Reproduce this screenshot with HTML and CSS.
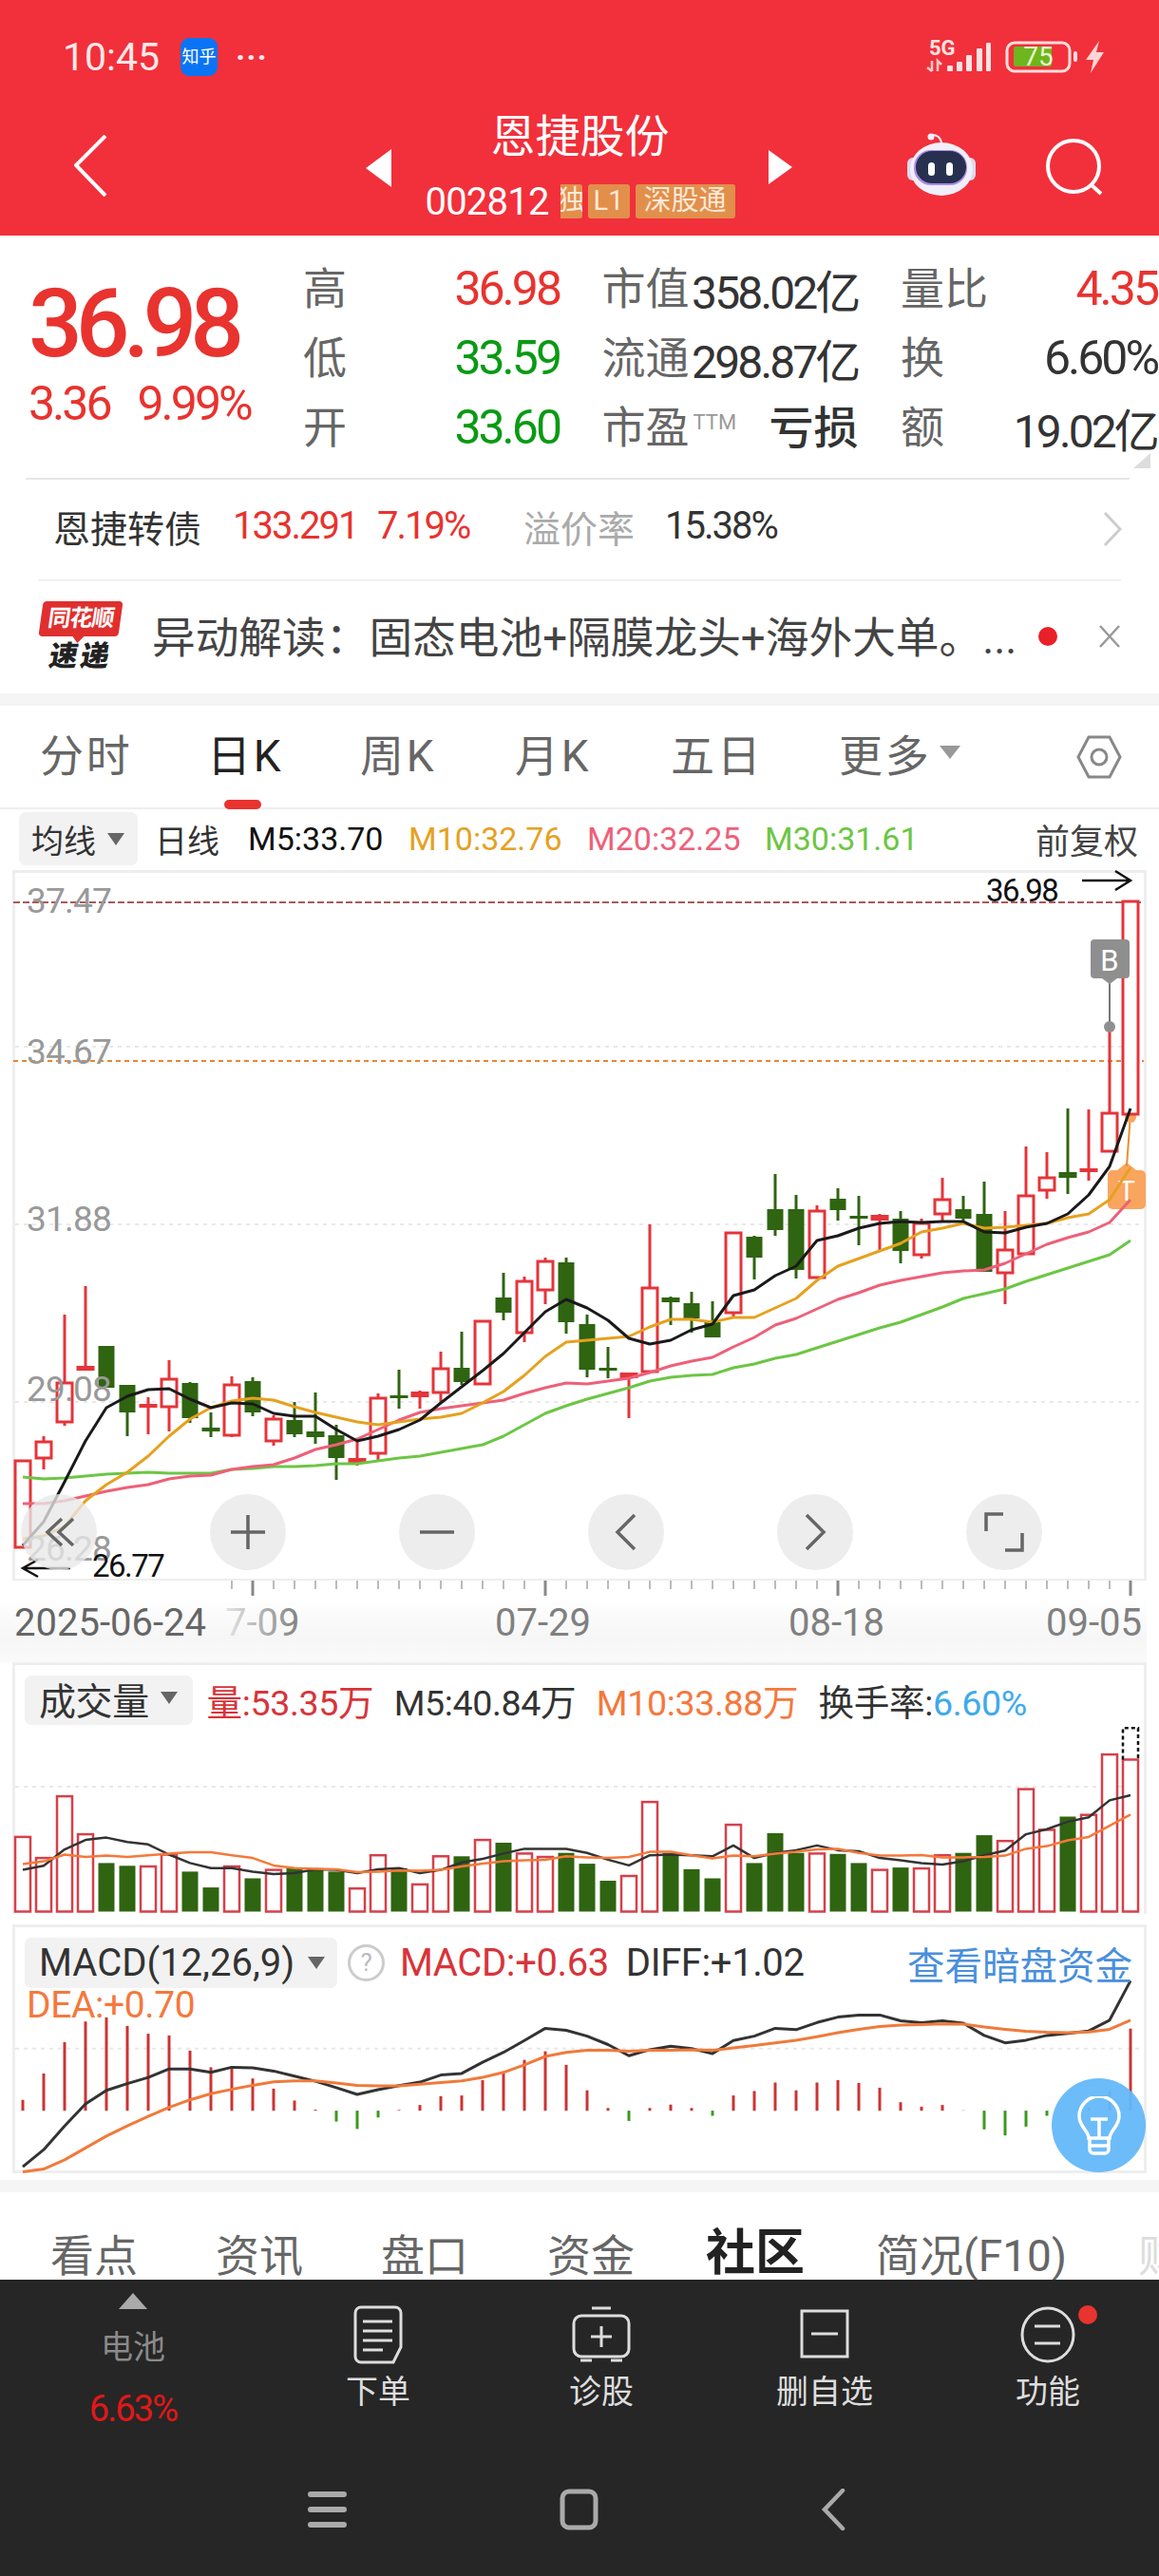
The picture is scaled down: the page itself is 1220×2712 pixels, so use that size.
FILE: index.html
```html
<!DOCTYPE html>
<html lang="zh-CN">

<head>
    <meta charset="UTF-8">
    <meta name="viewport" content="width=device-width, initial-scale=1.0">
    <title>恩捷股份</title>
    <link rel="stylesheet" href="styles.css">
</head>

<body>
    <div class="phone">
        <header class="top">
            <div class="status">
                <div class="status-left">
                    <span class="clock">10:45</span>
                    <span class="zhihu">知乎</span>
                    <span class="dots">···</span>
                </div>
                <svg class="status-right" width="188" height="36" viewBox="975 42 188 36">
                    <text x="978" y="58" class="net">5G</text>
                    <path d="M981 64v11M976 71l5 4M987 75V64l4 4" fill="none" stroke="#ffc9c9" stroke-width="2.500" />
                    <g fill="#fde3e3">
                        <rect x="997" y="69" width="6" height="6" rx="1" />
                        <rect x="1007" y="65" width="6" height="10" rx="1" />
                        <rect x="1017" y="58" width="6" height="17" rx="1" />
                        <rect x="1028" y="51" width="6" height="24" rx="1" />
                        <rect x="1038" y="45" width="5" height="30" rx="1" />
                    </g>
                    <rect x="1060" y="45" width="66" height="30" rx="8" fill="none" stroke="#fdd" stroke-width="3" />
                    <rect x="1067" y="49" width="40" height="21" rx="2" fill="#6fb51c" />
                    <text x="1093" y="69" class="batt">75</text>
                    <rect x="1130" y="54" width="4" height="11" rx="2" fill="#fdd" />
                    <path d="M1157 43l-14 20h8l-3 14 14-22h-8z" fill="#ffd5d5" />
                </svg>
            </div>
            <div class="nav">
                <svg class="back" width="35" height="65" viewBox="0 0 35 65">
                    <path d="M33 1L2 32l31 32" fill="none" stroke="#fff" stroke-width="4" />
                </svg>
                <svg class="tri-left" width="27" height="40" viewBox="0 0 27 40">
                    <path d="M27 0v40L0 20z" fill="#fff" />
                </svg>
                <div class="nav-center">
                    <div class="nav-title">恩捷股份</div>
                    <div class="nav-code">
                        <span class="code">002812</span>
                        <span class="tag tag-cut"><span>独</span></span>
                        <span class="tag tag-l1">L1</span>
                        <span class="tag tag-sz">深股通</span>
                    </div>
                </div>
                <svg class="tri-right" width="25" height="36" viewBox="0 0 25 36">
                    <path d="M0 0v36l25-18z" fill="#fff" />
                </svg>
                <svg class="robot" width="72" height="66" viewBox="0 0 72 66">
                    <circle cx="25" cy="4" r="3.500" fill="#eef" />
                    <path d="M26 2c6 0 9 3 10 8" fill="none" stroke="#eef" stroke-width="2" />
                    <rect x="0" y="26" width="72" height="24" rx="6" fill="#dcd9ee" />
                    <ellipse cx="36" cy="38" rx="33" ry="28" fill="#f1eff9" />
                    <rect x="7" y="18" width="56" height="37" rx="18" fill="#a98be8" />
                    <rect x="9" y="19" width="53" height="34" rx="17" fill="#27304f" />
                    <rect x="22" y="31" width="7" height="14" rx="3.500" fill="#fff" />
                    <rect x="41" y="31" width="7" height="14" rx="3.500" fill="#fff" />
                </svg>
                <svg class="search" width="62" height="60" viewBox="0 0 62 60">
                    <ellipse cx="30" cy="29" rx="27" ry="27" fill="none" stroke="#fff" stroke-width="4" />
                    <path d="M48 48l11 10" stroke="#fff" stroke-width="4" />
                </svg>
            </div>
        </header>

        <section class="quote">
            <div class="price-box">
                <div class="price">36.98</div>
                <div class="change"><span>3.36</span><span>9.99%</span></div>
            </div>
            <div class="stats">
                <div class="stat"><span class="lab">高</span><span class="val up">36.98</span></div>
                <div class="stat"><span class="lab">市值</span><span class="val val-sm">358.02亿</span></div>
                <div class="stat"><span class="lab">量比</span><span class="val up">4.35</span></div>
                <div class="stat"><span class="lab">低</span><span class="val down">33.59</span></div>
                <div class="stat"><span class="lab">流通</span><span class="val val-sm">298.87亿</span></div>
                <div class="stat"><span class="lab">换</span><span class="val">6.60%</span></div>
                <div class="stat"><span class="lab">开</span><span class="val down">33.60</span></div>
                <div class="stat"><span class="lab">市盈<sup class="ttm">TTM</sup></span><span class="val-cn">亏损</span></div>
                <div class="stat"><span class="lab">额</span><span class="val val-sm">19.02亿</span></div>
            </div>
            <i class="corner"></i>
        </section>
        <div class="divider"></div>

        <section class="bond">
            <span class="bond-name">恩捷转债</span>
            <span class="bond-price">133.291</span>
            <span class="bond-pct">7.19%</span>
            <span class="bond-lab">溢价率</span>
            <span class="bond-val">15.38%</span>
            <svg class="bond-more" width="20" height="36" viewBox="0 0 20 36">
                <path d="M2 1l16 17L2 35" fill="none" stroke="#ccc" stroke-width="3" />
            </svg>
        </section>
        <div class="divider divider-news"></div>

        <section class="news">
            <div class="news-logo">
                <span class="logo-top">同花顺</span>
                <span class="logo-bottom">速递</span>
            </div>
            <div class="news-text">异动解读：固态电池+隔膜龙头+海外大单。...</div>
            <i class="news-dot"></i>
            <svg class="news-close" width="24" height="24" viewBox="0 0 24 24">
                <path d="M2 1l20 22M22 1L2 23" stroke="#999" stroke-width="2.500" />
            </svg>
        </section>
        <div class="band"></div>

        <nav class="tabs">
            <span>分时</span>
            <span class="tab-on">日K</span>
            <span>周K</span>
            <span>月K</span>
            <span>五日</span>
            <span class="tab-more">更多<i class="caret caret-more"></i></span>
            <svg class="hex" width="48" height="48" viewBox="0 0 48 48">
                <path d="M13 3h22l11 21-11 21H13L2 24z" fill="none" stroke="#888" stroke-width="3" />
                <circle cx="24" cy="24" r="8" fill="none" stroke="#888" stroke-width="3" />
            </svg>
        </nav>

        <div class="ma-row">
            <span class="chip chip-ma">均线<i class="caret"></i></span>
            <span class="ma-day">日线</span>
            <span class="m5">M5:33.70</span>
            <span class="m10">M10:32.76</span>
            <span class="m20">M20:32.25</span>
            <span class="m30">M30:31.61</span>
            <span class="fq">前复权</span>
        </div>

        <div class="kline">
            <svg id="chartK" class="plot" width="1188" height="743" viewBox="16 919 1188 743"></svg>
            <div class="tools">
                <span class="tool"><svg width="44" height="44" viewBox="0 0 44 44"><path d="M25 8L10 22l15 14M37 8L22 22l15 14" fill="none" stroke="#666" stroke-width="3.500" /></svg></span>
                <span class="tool"><svg width="40" height="40" viewBox="0 0 40 40"><path d="M20 2v36M2 20h36" stroke="#666" stroke-width="3.500" /></svg></span>
                <span class="tool"><svg width="40" height="40" viewBox="0 0 40 40"><path d="M2 20h36" stroke="#666" stroke-width="3.500" /></svg></span>
                <span class="tool"><svg width="24" height="40" viewBox="0 0 24 40"><path d="M21 2L3 20l18 18" fill="none" stroke="#666" stroke-width="3.500" /></svg></span>
                <span class="tool"><svg width="24" height="40" viewBox="0 0 24 40"><path d="M3 2l18 18L3 38" fill="none" stroke="#666" stroke-width="3.500" /></svg></span>
                <span class="tool"><svg width="42" height="42" viewBox="0 0 42 42"><path d="M2 20V2h18M40 22v18H22" fill="none" stroke="#666" stroke-width="3.500" /></svg></span>
            </div>
        </div>

        <div class="time-axis">
            <svg id="chartAxis" width="1220" height="86" viewBox="0 1664 1220 86"></svg>
        </div>

        <div class="panel panel-vol">
            <svg id="chartVol" class="plot" width="1188" height="262" viewBox="16 1753 1188 262"></svg>
            <div class="panel-head">
                <span class="chip chip-vol">成交量<i class="caret"></i></span>
                <span class="t-red">量:53.35万</span>
                <span class="t-dark">M5:40.84万</span>
                <span class="t-orange">M10:33.88万</span>
                <span class="t-dark">换手率:<span class="t-blue">6.60%</span></span>
            </div>
        </div>

        <div class="panel panel-macd">
            <svg id="chartMacd" class="plot" width="1188" height="256" viewBox="16 2029 1188 256"></svg>
            <div class="panel-head macd-head">
                <span class="chip chip-macd">MACD(12,26,9)<i class="caret"></i></span>
                <span class="help">?</span>
                <span class="t-red">MACD:+0.63</span>
                <span class="t-dark t-diff">DIFF:+1.02</span>
                <span class="t-link">查看暗盘资金</span>
            </div>
            <div class="dea">DEA:+0.70</div>
            <span class="bulb">
                <svg width="46" height="62" viewBox="0 0 46 62">
                    <path d="M12 44c0-8-10-12-10-23a21 21 0 0 1 42 0c0 11-10 15-10 23z" fill="none" stroke="#fff" stroke-width="3.500" />
                    <path d="M14 24h18M23 24v20M13 44v12a4 4 0 0 0 4 4h12a4 4 0 0 0 4-4V44M14 52h18" fill="none" stroke="#fff" stroke-width="3.500" />
                </svg>
            </span>
        </div>

        <div class="band band-low"></div>

        <nav class="subtabs">
            <span>看点</span>
            <span>资讯</span>
            <span>盘口</span>
            <span>资金</span>
            <span class="subtab-on">社区</span>
            <span>简况(F10)</span>
            <span class="subtab-fade">财</span>
        </nav>

        <footer class="dock">
            <div class="dock-items">
                <div class="dock-item dock-sector">
                    <i class="sector-up"></i>
                    <span class="sector-name">电池</span>
                    <span class="sector-pct">6.63%</span>
                </div>
                <div class="dock-item">
                    <span class="dock-icon">
                        <svg width="54" height="62" viewBox="0 0 54 62">
                            <path d="M9 2h36a6 6 0 0 1 6 6v36l-8 16H9a6 6 0 0 1-6-6V8a6 6 0 0 1 6-6z" fill="none" stroke="#ddd" stroke-width="3" />
                            <path d="M11 17h31M11 27h31M11 37h31M11 47h21" stroke="#ddd" stroke-width="3" />
                        </svg>
                    </span>
                    <span class="dock-text">下单</span>
                </div>
                <div class="dock-item">
                    <span class="dock-icon">
                        <svg width="64" height="62" viewBox="0 0 64 62">
                            <rect x="3" y="11" width="58" height="43" rx="8" fill="none" stroke="#ddd" stroke-width="3" />
                            <path d="M22 3h20M32 22v22M21 33h22M10 58h12M42 58h12" stroke="#ddd" stroke-width="3" />
                        </svg>
                    </span>
                    <span class="dock-text">诊股</span>
                </div>
                <div class="dock-item">
                    <span class="dock-icon">
                        <svg width="52" height="62" viewBox="0 0 52 62">
                            <rect x="2" y="6" width="48" height="48" fill="none" stroke="#ddd" stroke-width="3" />
                            <path d="M12 30h28" stroke="#ddd" stroke-width="3" />
                        </svg>
                    </span>
                    <span class="dock-text">删自选</span>
                </div>
                <div class="dock-item dock-func">
                    <span class="dock-icon">
                        <svg width="58" height="62" viewBox="0 0 58 62">
                            <ellipse cx="29" cy="31" rx="27" ry="28" fill="none" stroke="#ddd" stroke-width="3" />
                            <path d="M15 22h27M15 40h27" stroke="#ddd" stroke-width="3" />
                        </svg>
                    </span>
                    <span class="dock-text">功能</span>
                    <i class="func-dot"></i>
                </div>
            </div>
        </footer>

        <div class="softkeys">
            <svg class="key-menu" width="41" height="40" viewBox="0 0 41 40">
                <path d="M3 4h35M3 20h35M3 36h35" stroke="#aaa" stroke-width="6" stroke-linecap="round" />
            </svg>
            <svg class="key-home" width="41" height="44" viewBox="0 0 41 44">
                <rect x="3" y="3" width="35" height="38" rx="7" fill="none" stroke="#aaa" stroke-width="5" />
            </svg>
            <svg class="key-back" width="26" height="44" viewBox="0 0 26 44">
                <path d="M23 2L4 22l19 20" fill="none" stroke="#aaa" stroke-width="4.500" stroke-linecap="round" />
            </svg>
        </div>
    </div>
    <script src="chart.js"></script>
</body>

</html>
```

FILE: styles.css
```css
* {
    box-sizing: border-box;
}

body {
    margin: 0;
    background-color: #fff;
    font-family: Roboto, 'Noto Sans CJK SC', sans-serif;
}

i {
    display: block;
    font-style: normal;
}

.phone {
    width: 1220px;
    height: 2712px;
    overflow: hidden;
    background-color: #fff;
}

/* cabecalho */
.top {
    height: 248px;
    background-color: #f1303b;
    color: #fff;
}

.status {
    height: 120px;
    padding: 0 57px 0 66px;
    display: flex;
    align-items: center;
    justify-content: space-between;
}

.status-left {
    display: flex;
    align-items: center;
}

.clock {
    font-size: 41px;
    color: #fde8e8;
    width: 124px;
}

.zhihu {
    width: 39px;
    height: 40px;
    border-radius: 9px;
    background-color: #0a74f5;
    font-size: 18px;
    line-height: 40px;
    text-align: center;
    white-space: nowrap;
}

.dots {
    margin-left: 19px;
    font-size: 34px;
    font-weight: 700;
    letter-spacing: 1px;
    color: #fde8e8;
}

.status-right {
    overflow: visible;
}

.net {
    font-size: 22px;
    font-weight: 700;
    fill: #ffe3e3;
}

.batt {
    font-size: 28px;
    fill: #e8f8d0;
    text-anchor: middle;
}

.nav {
    height: 128px;
    padding-left: 78px;
    display: flex;
}

.back {
    margin-top: 22px;
    margin-right: 272px;
}

.tri-left {
    margin-top: 37px;
}

.nav-center {
    width: 397px;
    text-align: center;
}

.nav-title {
    height: 72px;
    font-size: 47px;
    line-height: 48px;
}

.nav-code {
    display: flex;
    justify-content: center;
    align-items: center;
    height: 40px;
}

.code {
    width: 142px;
    font-size: 40px;
    text-align: left;
    letter-spacing: -.02em;
}

.tag {
    height: 36px;
    margin-right: 6px;
    border-radius: 3px;
    background-color: #e28f4b;
    color: #fde8d8;
    font-size: 29px;
    line-height: 35px;
    text-align: center;
}

.tag-cut {
    width: 23px;
    overflow: hidden;
    white-space: nowrap;
    direction: rtl;
    border-radius: 0 3px 3px 0;
}

.tag-cut span {
    margin-right: -3px;
}

.tag-l1 {
    width: 44px;
}

.tag-sz {
    width: 105px;
    margin-right: 0;
}

.tri-right {
    margin-top: 38px;
}

.robot {
    margin-top: 20px;
    margin-left: 121px;
}

.search {
    margin-top: 26px;
    margin-left: 73px;
}

/* cotacao */
.quote {
    position: relative;
    height: 255px;
    padding-top: 19px;
    display: flex;
}

.price-box {
    width: 319px;
    padding-left: 30px;
}

.price {
    margin-top: 24px;
    font-size: 100px;
    line-height: 100px;
    font-weight: 500;
    letter-spacing: -.07em;
    color: #e8332f;
}

.change {
    margin-top: 9px;
    display: flex;
    gap: 29px;
    font-size: 50px;
    line-height: 50px;
    letter-spacing: -.06em;
    color: #e8332f;
}

.stats {
    display: grid;
    grid-template-columns: repeat(3, 270px);
    grid-auto-rows: 73px;
    column-gap: 44.500px;
}

.stat {
    display: flex;
    align-items: center;
    justify-content: space-between;
    white-space: nowrap;
}

.lab {
    margin-bottom: 8px;
    font-size: 46px;
    color: #666;
}

.ttm {
    margin-left: 4px;
    font-size: 22px;
    color: #999;
    vertical-align: 14px;
    line-height: 0;
}

.val {
    font-size: 50px;
    letter-spacing: -.06em;
    color: #333;
}

.val-sm {
    font-size: 48px;
}

.val-cn {
    margin-bottom: 6px;
    font-size: 47px;
    font-weight: 500;
    color: #333;
}

.up {
    color: #e8332f;
}

.down {
    color: #0a9a14;
}

.corner {
    position: absolute;
    right: 9px;
    bottom: 10px;
    width: 0;
    height: 0;
    border-left: 18px solid transparent;
    border-bottom: 16px solid #ddd;
}

.divider {
    height: 2px;
    margin: 0 31px 0 27px;
    background-color: #e6e6e6;
}

.divider-news {
    margin: 0 40px;
    background-color: #f0f0f0;
}

/* conversivel */
.bond {
    height: 105px;
    padding: 0 0 8px 56px;
    display: flex;
    align-items: center;
    white-space: nowrap;
}

.bond-name {
    width: 189px;
    font-size: 39px;
    color: #333;
}

.bond-price {
    width: 152px;
    font-size: 40px;
    letter-spacing: -.05em;
    color: #e8332f;
}

.bond-pct {
    width: 154px;
    font-size: 40px;
    letter-spacing: -.05em;
    color: #e8332f;
}

.bond-lab {
    width: 149px;
    font-size: 39px;
    color: #aaa;
}

.bond-val {
    width: 461px;
    font-size: 40px;
    letter-spacing: -.05em;
    color: #333;
}

.bond-more {
    margin-top: 6px;
}

/* noticia */
.news {
    height: 118px;
    padding: 21px 0 0 41px;
    display: flex;
    white-space: nowrap;
}

.news-logo {
    width: 88px;
    height: 72px;
    margin-right: 31px;
    display: flex;
    flex-direction: column;
    align-items: center;
}

.logo-top {
    position: relative;
    width: 84px;
    height: 38px;
    border-radius: 4px;
    background-color: #e02f2f;
    color: #fff;
    font-size: 24px;
    font-weight: 700;
    line-height: 37px;
    letter-spacing: -1px;
    text-align: center;
    transform: skewX(-8deg);
}

.logo-top::after {
    content: "";
    position: absolute;
    left: 36px;
    top: 37px;
    width: 0;
    height: 0;
    border-left: 6px solid transparent;
    border-right: 6px solid transparent;
    border-top: 7px solid #e02f2f;
}

.logo-bottom {
    margin-top: 5px;
    font-size: 30px;
    font-weight: 900;
    line-height: 32px;
    letter-spacing: 3px;
    color: #222;
    transform: skewX(-10deg);
}

.news-text {
    width: 933px;
    padding-top: 12px;
    font-size: 45.700px;
    line-height: 56px;
    color: #444;
}

.news-dot {
    width: 20px;
    height: 20px;
    margin-top: 27px;
    border-radius: 50%;
    background-color: #e8202a;
}

.news-close {
    margin-top: 25px;
    margin-left: 43px;
}

.band {
    height: 13px;
    background-color: #f5f5f5;
}

/* abas */
.tabs {
    height: 109px;
    padding: 0 0 10px 42px;
    display: grid;
    grid-template-columns: 176px 161px 163px 164px 177px 250px 48px;
    align-items: center;
    border-bottom: 2px solid #eee;
    font-size: 46px;
    color: #666;
    white-space: nowrap;
}

.tabs span {
    position: relative;
    letter-spacing: .06em;
}

.tabs .tab-on {
    color: #222;
}

.tab-on::after {
    content: "";
    position: absolute;
    left: 18px;
    bottom: -27px;
    width: 39px;
    height: 10px;
    border-radius: 5px;
    background-color: #e8332f;
}

.tab-more {
    display: flex;
    align-items: center;
}

.hex {
    margin-top: 10px;
}

.caret {
    width: 0;
    height: 0;
    margin-left: 12px;
    border-left: 9px solid transparent;
    border-right: 9px solid transparent;
    border-top: 13px solid #666;
}

.caret-more {
    margin-left: 8px;
    border-left-width: 11px;
    border-right-width: 11px;
    border-top: 14px solid #999;
}

.ma-row {
    height: 64px;
    padding: 3px 0 0 20px;
    display: grid;
    grid-template-columns: 143px 98px 169px 188px 187px 285px auto;
    align-items: center;
    align-content: start;
    font-size: 34px;
    white-space: nowrap;
}

.chip {
    display: flex;
    align-items: center;
    border-radius: 7px;
    background-color: #f2f2f2;
    color: #333;
    white-space: nowrap;
}

.chip-ma {
    width: 125px;
    height: 56px;
    padding-left: 13px;
}

.ma-day {
    color: #333;
}

.m5 {
    color: #111;
}

.m10 {
    color: #e6a11f;
}

.m20 {
    color: #ee6079;
}

.m30 {
    color: #6cc644;
}

.fq {
    color: #444;
    font-size: 36px;
}

/* graficos */
.kline {
    position: relative;
    width: 1194px;
    height: 748px;
    margin-left: 13px;
    border: 3px solid #eee;
    border-bottom-width: 2px;
}

.plot {
    position: absolute;
    left: 0;
    top: 0;
    display: block;
    overflow: visible;
    font-family: Roboto, 'Noto Sans CJK SC', sans-serif;
}

.tools {
    position: absolute;
    left: 6px;
    top: 654px;
    display: flex;
    gap: 119px;
}

.tool {
    width: 80px;
    height: 80px;
    border-radius: 50%;
    background-color: rgba(232, 232, 232, .78);
    display: flex;
    align-items: center;
    justify-content: center;
}

.time-axis {
    height: 86px;
    width: 1207px;
    background: linear-gradient(to bottom, #fff 20%, #f6f6f6 70%, #fafafa);
}

.time-axis svg {
    display: block;
    font-family: Roboto, sans-serif;
}

.panel {
    position: relative;
    width: 1194px;
    margin-left: 13px;
    border: 3px solid #eee;
    border-bottom: 0;
}

.panel-vol {
    height: 265px;
    margin-bottom: 11px;
}

.panel-macd {
    height: 262px;
    border-bottom: 3px solid #eee;
    margin-bottom: 7px;
}

.panel-head {
    position: relative;
    padding: 9px 12px 0 10px;
    display: flex;
    align-items: center;
    gap: 21.500px;
    font-size: 37.600px;
    letter-spacing: -.01em;
    white-space: nowrap;
}

.panel-vol .panel-head > span {
    margin-bottom: 5px;
}

.panel-vol .chip-vol {
    margin-bottom: 0;
    padding-bottom: 4px;
}

.chip-vol {
    width: 177px;
    height: 52px;
    padding-left: 15px;
    margin-right: -7px;
    font-size: 39px;
}

.chip-macd {
    width: 329px;
    height: 53px;
    padding-left: 15px;
    margin-right: -12px;
    font-size: 40px;
    letter-spacing: 0;
}

.chip-macd .caret {
    margin-left: 14px;
}

.macd-head {
    gap: 23px;
    font-size: 40px;
}

.help {
    width: 39px;
    height: 39px;
    margin-right: -7px;
    border: 3px solid #ccc;
    border-radius: 50%;
    color: #bbb;
    font-size: 26px;
    line-height: 33px;
    text-align: center;
}

.t-red {
    color: #d8343a;
}

.t-dark {
    color: #333;
}

.t-diff {
    margin-left: -5px;
}

.t-orange {
    color: #f5783c;
}

.t-blue {
    color: #3eaaec;
}

.t-link {
    margin-left: auto;
    font-size: 39.500px;
    letter-spacing: 0;
    color: #4a8fdc;
}

.dea {
    position: relative;
    margin: -2px 0 0 12px;
    font-size: 39px;
    line-height: 36px;
    letter-spacing: -.01em;
    color: #f5783c;
}

.bulb {
    position: absolute;
    right: -2px;
    bottom: -2px;
    width: 99px;
    height: 99px;
    border-radius: 50%;
    background-color: rgba(100, 184, 249, .95);
    display: flex;
    align-items: center;
    justify-content: center;
}

/* abas de baixo */
.band-low {
    height: 13px;
}

.subtabs {
    height: 92px;
    padding: 36px 0 0 53px;
    display: grid;
    grid-template-columns: 174px 174px 175px 167px 179px 276px 60px;
    overflow: hidden;
    font-size: 46px;
    line-height: 62px;
    color: #666;
    white-space: nowrap;
}

.subtabs .subtab-on {
    margin-top: -2px;
    color: #222;
    font-size: 52px;
    font-weight: 700;
}

.subtab-fade {
    color: #ddd;
}

.dock {
    height: 190px;
    background-color: #262626;
    color: #ddd;
}

.dock-items {
    padding: 14px 0 0 35px;
    display: flex;
    gap: 25px;
}

.dock-item {
    position: relative;
    width: 210px;
    display: flex;
    flex-direction: column;
    align-items: center;
}

.dock-sector {
    margin-right: 23px;
}

.sector-up {
    width: 0;
    height: 0;
    border-left: 15px solid transparent;
    border-right: 15px solid transparent;
    border-bottom: 17px solid #aaa;
}

.sector-name {
    margin-top: 20px;
    font-size: 34px;
    line-height: 40px;
    color: #8a8a8a;
}

.sector-pct {
    margin-top: 25px;
    font-size: 38px;
    line-height: 40px;
    letter-spacing: -.05em;
    color: #e01818;
}

.dock-icon {
    display: block;
    height: 62px;
    margin-top: 13px;
}

.dock-icon svg {
    display: block;
}

.dock-text {
    margin-top: 13px;
    font-size: 34px;
    line-height: 32px;
}

.func-dot {
    position: absolute;
    left: 137px;
    top: 13px;
    width: 20px;
    height: 20px;
    border-radius: 50%;
    background-color: #e8332f;
}

.softkeys {
    height: 122px;
    padding: 30px 0 0 324px;
    display: flex;
    align-items: flex-start;
    background-color: #262626;
}

.key-menu {
    margin-top: 2px;
    margin-right: 224px;
}

.key-home {
    margin-right: 234px;
}
```

FILE: chart.js
```js
// geometria: um candle a cada 22px, coordenadas do svg = coordenadas da pagina
const RED = "#e5343a";
const GREEN = "#2f6411";

function posX(i) {
    return 24 + 22 * i;
}

// paineis de baixo foram medidos em unidades de 1/2.8px a partir de y=1740
function posY(v) {
    return +(1740 + v / 2.8).toFixed(1);
}

// [maxima, topo, base, minima, cor]
const candles = [
    [1538, 1538, 1629, 1629, "r"], [1512, 1518, 1535, 1547, "r"], [1384, 1456, 1497, 1501, "r"],
    [1354, 1438, 1443, 1443, "r"], [1417, 1417, 1461, 1461, "g"], [1458, 1458, 1487, 1512, "g"],
    [1471, 1478, 1482, 1510, "r"], [1432, 1452, 1481, 1507, "r"], [1455, 1456, 1493, 1498, "g"],
    [1487, 1503, 1507, 1513, "g"], [1449, 1458, 1511, 1513, "r"], [1450, 1454, 1487, 1491, "g"],
    [1490, 1494, 1517, 1522, "r"], [1476, 1495, 1510, 1513, "g"], [1466, 1507, 1513, 1520, "g"],
    [1500, 1511, 1535, 1558, "g"], [1517, 1535, 1541, 1543, "r"], [1467, 1472, 1530, 1538, "r"],
    [1442, 1469, 1472, 1483, "g"], [1464, 1465, 1471, 1483, "r"], [1423, 1441, 1466, 1477, "r"],
    [1402, 1440, 1455, 1458, "g"], [1391, 1391, 1457, 1458, "r"], [1340, 1366, 1382, 1390, "g"],
    [1344, 1349, 1403, 1413, "r"], [1324, 1328, 1358, 1373, "r"], [1324, 1329, 1392, 1404, "g"],
    [1384, 1394, 1442, 1450, "g"], [1418, 1440, 1443, 1451, "g"], [1445, 1445, 1451, 1493, "r"],
    [1289, 1356, 1444, 1445, "r"], [1365, 1366, 1371, 1395, "g"], [1360, 1372, 1388, 1403, "g"],
    [1370, 1392, 1408, 1408, "g"], [1297, 1298, 1382, 1386, "r"], [1301, 1302, 1324, 1347, "g"],
    [1236, 1273, 1295, 1301, "g"], [1258, 1273, 1337, 1346, "g"], [1269, 1275, 1345, 1345, "r"],
    [1251, 1262, 1274, 1285, "g"], [1259, 1280, 1283, 1311, "g"], [1278, 1279, 1285, 1318, "r"],
    [1275, 1283, 1317, 1330, "g"], [1283, 1288, 1321, 1325, "r"], [1240, 1263, 1278, 1285, "r"],
    [1259, 1273, 1283, 1285, "g"], [1244, 1278, 1339, 1339, "g"], [1275, 1316, 1340, 1373, "r"],
    [1207, 1259, 1320, 1320, "r"], [1213, 1240, 1253, 1262, "r"], [1167, 1234, 1240, 1257, "g"],
    [1168, 1230, 1234, 1243, "r"], [1080, 1172, 1212, 1213, "r"], [949, 949, 1173, 1173, "r"]
];

const m5 = [1627, 1602, 1560, 1517, 1482, 1470, 1463, 1462, 1473, 1482, 1477, 1478, 1488, 1491, 1491, 1505, 1517, 1512, 1505, 1495, 1477, 1460, 1443, 1425, 1403, 1381, 1368, 1377, 1390, 1409, 1415, 1411, 1400, 1394, 1364, 1358, 1343, 1333, 1306, 1301, 1293, 1288, 1286, 1287, 1286, 1286, 1297, 1298, 1292, 1288, 1278, 1258, 1228, 1167];
const m10 = [1620, 1617, 1607, 1580, 1563, 1550, 1533, 1512, 1494, 1482, 1475, 1472, 1474, 1481, 1487, 1492, 1497, 1500, 1497, 1494, 1492, 1488, 1477, 1465, 1448, 1428, 1413, 1411, 1409, 1407, 1397, 1389, 1389, 1392, 1387, 1387, 1377, 1367, 1348, 1333, 1325, 1317, 1309, 1297, 1293, 1288, 1293, 1292, 1290, 1288, 1282, 1278, 1263, 1229];
const m20 = [1583, 1583, 1580, 1575, 1570, 1566, 1563, 1557, 1554, 1553, 1547, 1544, 1542, 1535, 1526, 1521, 1515, 1505, 1495, 1487, 1483, 1480, 1477, 1474, 1467, 1461, 1456, 1457, 1454, 1451, 1445, 1438, 1433, 1429, 1418, 1408, 1395, 1388, 1378, 1368, 1361, 1353, 1348, 1344, 1340, 1338, 1337, 1330, 1320, 1310, 1303, 1297, 1287, 1263];
const m30 = [1555, 1557, 1556, 1554, 1552, 1551, 1550, 1551, 1551, 1551, 1547, 1546, 1544, 1544, 1543, 1541, 1541, 1538, 1535, 1533, 1529, 1525, 1521, 1512, 1500, 1488, 1480, 1473, 1467, 1461, 1454, 1450, 1448, 1447, 1440, 1436, 1430, 1426, 1419, 1412, 1405, 1398, 1392, 1384, 1376, 1367, 1362, 1357, 1349, 1342, 1335, 1328, 1321, 1306];

// topo da barra de volume e cor
const volTop = [543, 605, 423, 535, 620, 628, 630, 595, 645, 692, 630, 665, 640, 635, 640, 645, 695, 597, 635, 683, 600, 600, 552, 560, 592, 602, 590, 622, 672, 658, 440, 590, 638, 665, 507, 620, 532, 590, 592, 593, 620, 640, 633, 636, 597, 590, 538, 555, 402, 522, 483, 478, 300, 315];
const volM5 = [640, 628, 580, 552, 545, 558, 565, 595, 620, 635, 635, 645, 652, 650, 638, 640, 650, 638, 635, 650, 640, 618, 608, 592, 578, 578, 578, 590, 610, 627, 597, 595, 597, 600, 568, 605, 590, 582, 568, 582, 585, 605, 612, 620, 624, 615, 597, 583, 535, 520, 498, 485, 435, 420];
const volM10 = [623, 615, 595, 602, 598, 602, 597, 592, 588, 588, 597, 605, 627, 635, 637, 638, 647, 645, 642, 643, 640, 630, 622, 615, 612, 610, 600, 603, 605, 602, 587, 587, 597, 606, 598, 600, 592, 587, 580, 578, 590, 598, 598, 596, 603, 603, 602, 598, 578, 570, 553, 543, 510, 477];

const macdBar = [1318, 1240, 1148, 1087, 1075, 1100, 1123, 1128, 1173, 1222, 1225, 1255, 1285, 1320, 1347, 1382, 1404, 1370, 1348, 1333, 1307, 1305, 1260, 1240, 1200, 1175, 1215, 1290, 1342, 1380, 1342, 1332, 1342, 1365, 1305, 1292, 1267, 1290, 1267, 1260, 1268, 1282, 1325, 1338, 1333, 1349, 1405, 1423, 1397, 1365, 1351, 1342, 1292, 1108];
const diff = [1515, 1465, 1395, 1330, 1290, 1270, 1252, 1227, 1227, 1237, 1222, 1224, 1233, 1248, 1263, 1282, 1302, 1288, 1276, 1266, 1245, 1240, 1207, 1178, 1143, 1107, 1113, 1130, 1155, 1188, 1170, 1160, 1167, 1182, 1143, 1130, 1107, 1111, 1090, 1074, 1068, 1068, 1085, 1091, 1085, 1092, 1128, 1150, 1142, 1128, 1122, 1115, 1083, 967];
const dea = [1530, 1522, 1495, 1460, 1425, 1395, 1367, 1340, 1318, 1300, 1287, 1275, 1265, 1262, 1262, 1268, 1275, 1277, 1277, 1272, 1267, 1262, 1252, 1237, 1215, 1190, 1178, 1172, 1172, 1175, 1172, 1172, 1170, 1172, 1165, 1158, 1150, 1142, 1132, 1120, 1110, 1102, 1098, 1096, 1094, 1095, 1103, 1110, 1116, 1119, 1120, 1118, 1110, 1083];

function linha(valores, cor, largura, conv) {
    const pontos = valores.map(function (v, i) {
        return posX(i) + "," + (conv ? conv(v) : v);
    }).join(" ");
    return `<polyline points="${pontos}" fill="none" stroke="${cor}" stroke-width="${largura}" stroke-linejoin="round"/>`;
}

function grade(y, x2) {
    return `<line x1="16" x2="${x2}" y1="${y}" y2="${y}" stroke="#e9e9e9" stroke-width="2" stroke-dasharray="4 5"/>`;
}

function desenhaK() {
    let s = "";
    [1102, 1289, 1476].forEach((y) => s += grade(y, 1204));
    s += `<line x1="14" x2="1204" y1="950" y2="950" stroke="#a85a5a" stroke-width="2" stroke-dasharray="7 3"/>`;
    s += `<line x1="14" x2="1204" y1="1117" y2="1117" stroke="#e8872f" stroke-width="2" stroke-dasharray="5 4"/>`;

    // marcador T
    s += `<rect x="1166" y="1232" width="40" height="41" rx="5" fill="#f9a55e"/>`;
    s += `<path d="M1176 1232l10-8 10 8z" fill="#f9a55e"/>`;
    s += `<text x="1186" y="1264" font-size="30" fill="#fff" text-anchor="middle">T</text>`;
    s += `<line x1="1186" y1="1228" x2="1190" y2="1173" stroke="#e8902f" stroke-width="2"/>`;
    s += `<circle cx="1190" cy="1176" r="6" fill="#f9a55e"/>`;

    candles.forEach(function (c, i) {
        const x = posX(i);
        const cor = c[4] === "r" ? RED : GREEN;
        const alt = c[2] - c[1];
        s += `<line x1="${x}" x2="${x}" y1="${c[0]}" y2="${c[1]}" stroke="${cor}" stroke-width="3"/>`;
        s += `<line x1="${x}" x2="${x}" y1="${c[2]}" y2="${c[3]}" stroke="${cor}" stroke-width="3"/>`;
        if (c[4] === "r") {
            if (alt < 7) {
                s += `<rect x="${x - 9.5}" y="${c[1]}" width="19" height="${alt}" fill="${cor}"/>`;
            } else {
                s += `<rect x="${x - 8}" y="${c[1]}" width="16" height="${alt}" fill="#fff" stroke="${cor}" stroke-width="3"/>`;
            }
        } else {
            const w = alt < 7 ? 19 : 17;
            s += `<rect x="${x - w / 2}" y="${c[1]}" width="${w}" height="${alt}" fill="${cor}"/>`;
        }
    });

    // marcador B
    s += `<line x1="1168" y1="1030" x2="1168" y2="1081" stroke="#777" stroke-width="2"/>`;
    s += `<circle cx="1168" cy="1081" r="6" fill="#8f8f8f"/>`;
    s += `<path d="M1160 1030l8 6 8-6z" fill="#8f8f8f"/>`;
    s += `<rect x="1148" y="989" width="41" height="41" rx="4" fill="#8f8f8f"/>`;
    s += `<text x="1168" y="1022" font-size="31" fill="#fff" text-anchor="middle">B</text>`;

    s += linha(m30, "#6cc644", 3);
    s += linha(m20, "#ee6079", 3);
    s += linha(m10, "#e6a11f", 3);
    s += linha(m5, "#1a1a1a", 3);

    [["37.47", 961], ["34.67", 1120], ["31.88", 1296], ["29.08", 1475], ["26.28", 1643]].forEach(function (p) {
        s += `<text x="28" y="${p[1]}" font-size="37" letter-spacing="-.8" fill="#999">${p[0]}</text>`;
    });

    s += `<text x="1038" y="949" font-size="33" letter-spacing="-1.5" fill="#111">36.98</text>`;
    s += `<path d="M1139 927h50M1174 917l16 10-16 10" fill="none" stroke="#111" stroke-width="2.500"/>`;
    s += `<text x="97" y="1660" font-size="33" letter-spacing="-1.5" fill="#111">26.77</text>`;
    s += `<path d="M74 1651H24M40 1642l-16 9 16 9" fill="none" stroke="#111" stroke-width="2.500"/>`;

    document.querySelector("#chartK").innerHTML = s;
}

function desenhaEixo() {
    let s = `<defs><linearGradient id="fade"><stop offset="0" stop-color="#e4e4e4"/><stop offset="1" stop-color="#808080"/></linearGradient></defs>`;
    for (let i = 10; i < 54; i++) {
        const longo = (i - 11) % 14 === 0;
        s += `<line x1="${posX(i)}" x2="${posX(i)}" y1="1664" y2="${longo ? 1680 : 1673}" stroke="${longo ? "#888" : "#bbb"}" stroke-width="${longo ? 3 : 2}"/>`;
    }
    s += `<text x="15" y="1722" font-size="40" fill="#666">2025-06-24</text>`;
    s += `<text x="237" y="1722" font-size="40" fill="url(#fade)">7-09</text>`;
    s += `<text x="521" y="1722" font-size="40" fill="#808080">07-29</text>`;
    s += `<text x="830" y="1722" font-size="40" fill="#808080">08-18</text>`;
    s += `<text x="1101" y="1722" font-size="40" fill="#808080">09-05</text>`;
    document.querySelector("#chartAxis").innerHTML = s;
}

function desenhaVolume() {
    let s = grade(posY(395), 1204);
    const base = posY(763);
    volTop.forEach(function (v, i) {
        const x = posX(i);
        const y = posY(v);
        if (candles[i][4] === "r") {
            s += `<rect x="${x - 8}" y="${y}" width="16" height="${(base - y).toFixed(1)}" fill="#fff" stroke="#d6404a" stroke-width="2.5"/>`;
        } else {
            s += `<rect x="${x - 8.5}" y="${y}" width="17" height="${(base - y).toFixed(1)}" fill="${GREEN}"/>`;
        }
    });
    s += `<path d="M1182 ${posY(315)}V${posY(222)}h16V${posY(315)}" fill="none" stroke="#111" stroke-width="2.5" stroke-dasharray="4 3"/>`;
    s += linha(volM5, "#333", 2.5, posY);
    s += linha(volM10, "#f5793a", 2.5, posY);
    document.querySelector("#chartVol").innerHTML = s;
}

function desenhaMacd() {
    let s = grade(posY(1167), 1204);
    const base = posY(1350);
    macdBar.forEach(function (v, i) {
        const cor = v > 1350 ? "#3a9a1d" : "#cc3333";
        s += `<line x1="${posX(i)}" x2="${posX(i)}" y1="${base}" y2="${posY(v)}" stroke="${cor}" stroke-width="3"/>`;
    });
    s += linha(diff, "#333", 3, posY);
    s += linha(dea, "#f07a3a", 3, posY);
    document.querySelector("#chartMacd").innerHTML = s;
}

desenhaK();
desenhaEixo();
desenhaVolume();
desenhaMacd();
```
